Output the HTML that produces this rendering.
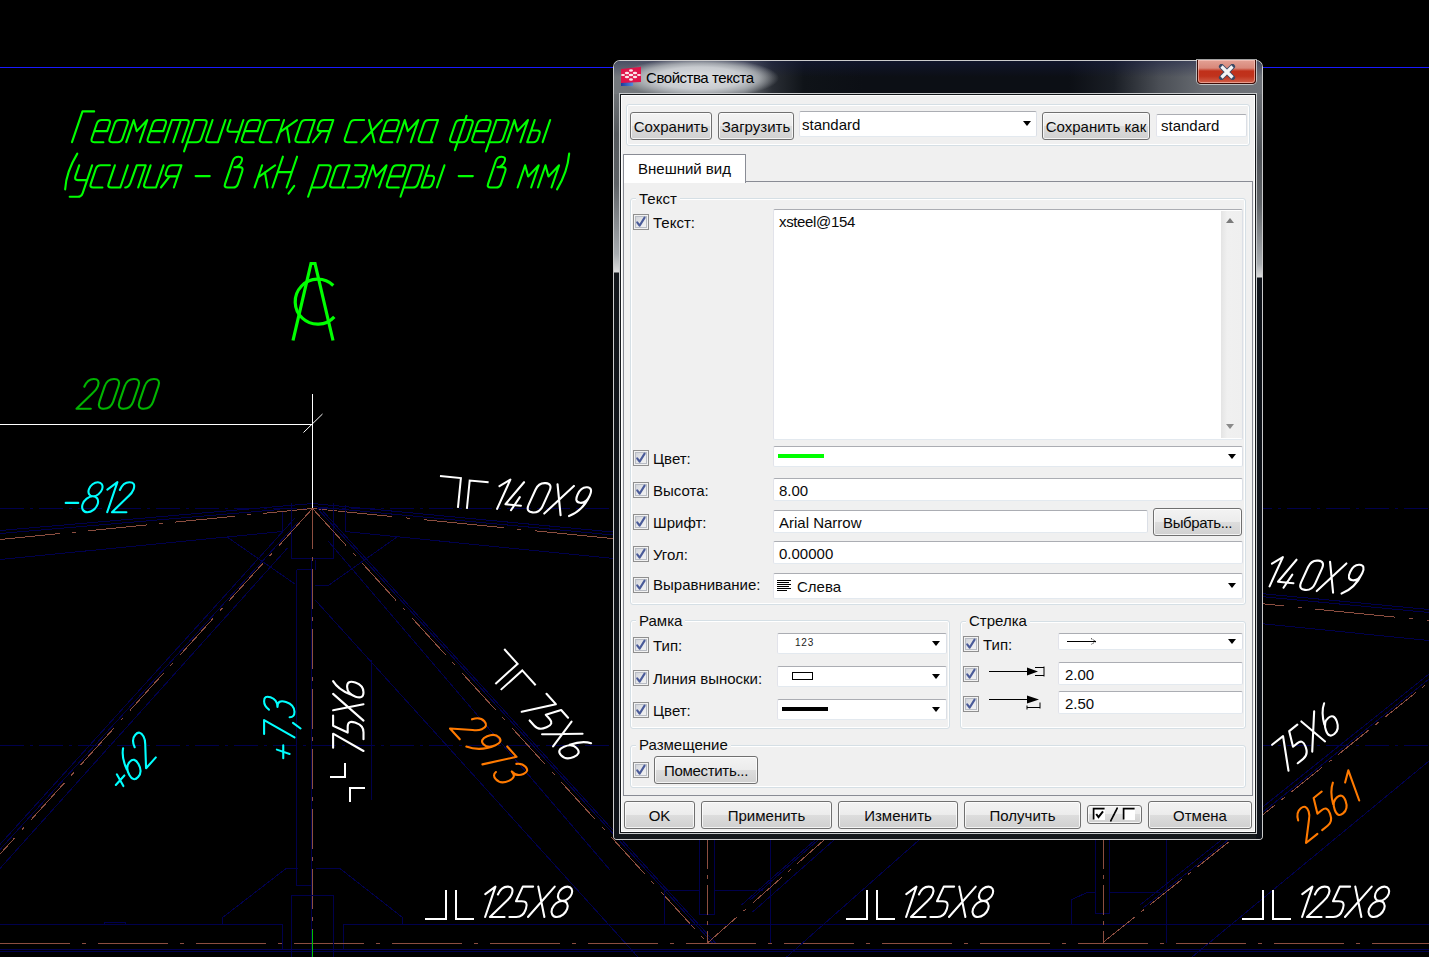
<!DOCTYPE html><html><head><meta charset="utf-8"><title>Свойства текста</title><style>
*{margin:0;padding:0;box-sizing:border-box}
html,body{width:1429px;height:957px;overflow:hidden;background:#000}
body{position:relative;font-family:"Liberation Sans",sans-serif;font-size:15px;color:#000}
div{position:absolute}
.t{white-space:pre;line-height:17px;font-size:15px;color:#0a0a0a}
.btn{border:1px solid #707070;border-radius:3px;background:linear-gradient(#f3f3f3 0%,#ececec 48%,#dddddd 50%,#d0d0d0 100%);box-shadow:inset 0 0 0 1px rgba(255,255,255,.75)}
.edit{background:#fff;border:1px solid #e3e9ef;border-top-color:#abadb3;border-left-color:#e2e3ea;border-right-color:#dbdfe6;border-radius:2px}
.arr{width:0;height:0;border-left:4.5px solid transparent;border-right:4.5px solid transparent;border-top:5px solid #000}
.chk{width:16px;height:16px;border:1px solid #8f8f8f;background:linear-gradient(135deg,#c9ccd3 0%,#e9eaec 55%,#f4f4f4 100%);box-shadow:inset 0 0 0 1px #f2f2f2, inset 0 0 0 2px #b8bcc4}
.chk svg{position:absolute;left:-1px;top:-1px}
.grp{border:1px solid #d5dfe5;border-radius:3px;box-shadow:inset 0 0 0 1px #fff}
.glab{background:#f0f0f0}
</style></head><body>
<svg style="position:absolute;left:0;top:0" width="1429" height="957" viewBox="0 0 1429 957">
<g shape-rendering="crispEdges">
<line x1="0" y1="67.5" x2="1429" y2="67.5" stroke="#1a1aff" stroke-width="1"/>
<line x1="0" y1="508.5" x2="1429" y2="508.5" stroke="#00004c" stroke-width="1" stroke-dasharray="24 6 3 6"/>
<line x1="0" y1="745.5" x2="1429" y2="745.5" stroke="#00004c" stroke-width="1" stroke-dasharray="24 6 3 6"/>
<line x1="0" y1="530.5" x2="312.5" y2="503.5" stroke="#00004c" stroke-width="1"/>
<line x1="0" y1="533.5" x2="280" y2="509.5" stroke="#00004c" stroke-width="1"/>
<line x1="0" y1="539.5" x2="312.5" y2="508.5" stroke="#8c4e40" stroke-width="1" stroke-dasharray="60 12 4 12"/>
<line x1="0" y1="559.5" x2="282" y2="531.5" stroke="#00004c" stroke-width="1"/>
<path d="M282,531.5 L282,512" fill="none" stroke="#00004c" stroke-width="1"/>
<line x1="312.5" y1="503.5" x2="1429" y2="609.5" stroke="#00004c" stroke-width="1"/>
<line x1="312.5" y1="506.5" x2="1429" y2="612.5" stroke="#00004c" stroke-width="1"/>
<line x1="312.5" y1="508.5" x2="1429" y2="620.5" stroke="#8c4e40" stroke-width="1" stroke-dasharray="80 14 4 14"/>
<line x1="345" y1="531.5" x2="1429" y2="640.5" stroke="#00004c" stroke-width="1"/>
<path d="M345,531.5 L345,505" fill="none" stroke="#00004c" stroke-width="1"/>
<path d="M291.5,503 L291.5,558.5 L333.5,558.5 L333.5,503" fill="none" stroke="#00004c" stroke-width="1"/>
<path d="M296.5,569.5 L296.5,885.5 L311.5,885.5" fill="none" stroke="#00004c" stroke-width="1"/>
<path d="M296.5,569.5 L311.5,569.5" fill="none" stroke="#00004c" stroke-width="1"/>
<path d="M227,537 L295,584" fill="none" stroke="#00004c" stroke-width="1"/>
<path d="M397,537 L329,585 L315,585" fill="none" stroke="#00004c" stroke-width="1"/>
<path d="M315,570 L315,560" fill="none" stroke="#00004c" stroke-width="1"/>
<line x1="312.5" y1="508.5" x2="312.5" y2="957" stroke="#8c4e40" stroke-width="1" stroke-dasharray="40 8 4 8"/>
<line x1="311.5" y1="560" x2="311.5" y2="957" stroke="#00004c" stroke-width="1"/>
<line x1="371.5" y1="660" x2="371.5" y2="800" stroke="#00004c" stroke-width="1.5"/>
<line x1="312.5" y1="508.5" x2="-93.0153707052441" y2="957" stroke="#8c4e40" stroke-width="1" stroke-dasharray="50 10 4 10"/>
<line x1="298" y1="522" x2="-86" y2="944" stroke="#00004c" stroke-width="1"/>
<line x1="295" y1="518" x2="-90" y2="944" stroke="#00004c" stroke-width="1"/>
<line x1="287.5" y1="548" x2="-79.4" y2="957" stroke="#00004c" stroke-width="1"/>
<line x1="312.5" y1="508.5" x2="707.5" y2="943" stroke="#8c4e40" stroke-width="1" stroke-dasharray="50 10 4 10"/>
<line x1="317.5" y1="508.5" x2="712.5" y2="943" stroke="#00004c" stroke-width="1"/>
<line x1="320.5" y1="508.5" x2="715.5" y2="943" stroke="#00004c" stroke-width="1"/>
<line x1="328.5" y1="541.5" x2="610" y2="870" stroke="#00004c" stroke-width="1"/>
<line x1="315.2" y1="600" x2="638.0" y2="957" stroke="#00004c" stroke-width="1"/>
<path d="M0,924.5 L282.5,924.5 L282.5,949.5" fill="none" stroke="#00004c" stroke-width="1"/>
<path d="M343.5,949.5 L343.5,924.5 L1429,924.5" fill="none" stroke="#00004c" stroke-width="1"/>
<line x1="0" y1="943.5" x2="1429" y2="943.5" stroke="#8c4e40" stroke-width="1" stroke-dasharray="70 12 4 12"/>
<line x1="0" y1="949.5" x2="1429" y2="949.5" stroke="#00004c" stroke-width="1"/>
<line x1="0" y1="951.5" x2="1429" y2="951.5" stroke="#00004c" stroke-width="1"/>
<path d="M222,924.5 L222,918 L286,868.5 L298,868.5" fill="none" stroke="#00004c" stroke-width="1"/>
<path d="M291,957 L291,895 L333,895 L333,957" fill="none" stroke="#00004c" stroke-width="1"/>
<path d="M316,868.5 L340,868.5 L402.5,917.5 L402.5,924.5" fill="none" stroke="#00004c" stroke-width="1"/>
<path d="M104,924.5 L104,922 L125,922 L125,924.5" fill="none" stroke="#00004c" stroke-width="1"/>
<path d="M699.5,839 L699.5,914.5 L714.5,914.5 L714.5,839" fill="none" stroke="#00004c" stroke-width="1"/>
<line x1="707.5" y1="839" x2="707.5" y2="943" stroke="#8c4e40" stroke-width="1" stroke-dasharray="30 6 4 6"/>
<line x1="770.5" y1="839" x2="770.5" y2="943" stroke="#00004c" stroke-width="1"/>
<path d="M664,924.5 L664,890 L699.5,890" fill="none" stroke="#00004c" stroke-width="1"/>
<path d="M714.5,890 L763,890" fill="none" stroke="#00004c" stroke-width="1"/>
<line x1="707.5" y1="943" x2="825.1470588235294" y2="839" stroke="#8c4e40" stroke-width="1" stroke-dasharray="40 8 4 8"/>
<line x1="741.4864253393665" y1="905" x2="816.1470588235294" y2="839" stroke="#00004c" stroke-width="1"/>
<line x1="750.1425339366516" y1="900" x2="819.1470588235294" y2="839" stroke="#00004c" stroke-width="1"/>
<line x1="752.5678733031674" y1="912" x2="835.1470588235294" y2="839" stroke="#00004c" stroke-width="1"/>
<line x1="786.6628959276018" y1="957" x2="920.1470588235294" y2="839" stroke="#00004c" stroke-width="1"/>
<path d="M1095.5,839 L1095.5,913.5 L1109.5,913.5 L1109.5,839" fill="none" stroke="#00004c" stroke-width="1"/>
<line x1="1103.5" y1="839" x2="1103.5" y2="943" stroke="#8c4e40" stroke-width="1" stroke-dasharray="30 6 4 6"/>
<line x1="1166.5" y1="839" x2="1166.5" y2="943" stroke="#00004c" stroke-width="1"/>
<path d="M1071,924.5 L1071,900 L1088,892 L1095.5,892" fill="none" stroke="#00004c" stroke-width="1"/>
<path d="M1109.5,892 L1160,892" fill="none" stroke="#00004c" stroke-width="1"/>
<line x1="1103.5" y1="942" x2="1429" y2="682" stroke="#8c4e40" stroke-width="1" stroke-dasharray="40 8 4 8"/>
<line x1="1140" y1="905" x2="1429" y2="674" stroke="#00004c" stroke-width="1"/>
<line x1="1143" y1="908" x2="1429" y2="679" stroke="#00004c" stroke-width="1"/>
<line x1="1192" y1="957" x2="1429" y2="761" stroke="#00004c" stroke-width="1"/>
</g>
<g shape-rendering="crispEdges">
<line x1="0" y1="424.5" x2="313" y2="424.5" stroke="#ffffff" stroke-width="1"/>
<line x1="312.5" y1="394" x2="312.5" y2="508" stroke="#ffffff" stroke-width="1"/>
</g>
<line x1="303.5" y1="432.5" x2="322.5" y2="414" stroke="#ffffff" stroke-width="1"/>
<line x1="312.5" y1="930" x2="312.5" y2="957" stroke="#00c000" stroke-width="1" shape-rendering="crispEdges"/>
<g transform="translate(72.00,142.20) rotate(0.00) scale(3.0800,3.0800) skewX(-18.78)" fill="none" stroke="#00ff00" stroke-width="2.1" stroke-linecap="round" stroke-linejoin="round" vector-effect="non-scaling-stroke"><path vector-effect="non-scaling-stroke" transform="translate(0.00,0)" d="M0,0 V-10 H3.8"/><path vector-effect="non-scaling-stroke" transform="translate(6.00,0)" d="M0,-3.6 H4.2 V-6 Q4.2,-7.2 3,-7.2 H1.2 Q0,-7.2 0,-6 V-1.2 Q0,0 1.2,0 H4.2"/><path vector-effect="non-scaling-stroke" transform="translate(11.80,0)" d="M1.2,0 H3 Q4.2,0 4.2,-1.2 V-6 Q4.2,-7.2 3,-7.2 H1.2 Q0,-7.2 0,-6 V-1.2 Q0,0 1.2,0 Z"/><path vector-effect="non-scaling-stroke" transform="translate(17.60,0)" d="M0,0 V-7.2 L2.2,-3.6 L4.4,-7.2 V0"/><path vector-effect="non-scaling-stroke" transform="translate(24.20,0)" d="M0,-3.6 H4.2 V-6 Q4.2,-7.2 3,-7.2 H1.2 Q0,-7.2 0,-6 V-1.2 Q0,0 1.2,0 H4.2"/><path vector-effect="non-scaling-stroke" transform="translate(30.00,0)" d="M0,0 V-7.2 H4.6 Q5.8,-7.2 5.8,-6 V0 M2.9,-7.2 V0"/><path vector-effect="non-scaling-stroke" transform="translate(37.40,0)" d="M0,3 V-7.2 H3 Q4.2,-7.2 4.2,-6 V-1.2 Q4.2,0 3,0 H0"/><path vector-effect="non-scaling-stroke" transform="translate(43.20,0)" d="M0,-7.2 V-1.2 Q0,0 1.2,0 H4.2 M4.2,-7.2 V0"/><path vector-effect="non-scaling-stroke" transform="translate(49.00,0)" d="M0,-7.2 V-4.6 Q0,-3.4 1.2,-3.4 H4.2 M4.2,-7.2 V0"/><path vector-effect="non-scaling-stroke" transform="translate(54.80,0)" d="M0,-3.6 H4.2 V-6 Q4.2,-7.2 3,-7.2 H1.2 Q0,-7.2 0,-6 V-1.2 Q0,0 1.2,0 H4.2"/><path vector-effect="non-scaling-stroke" transform="translate(60.60,0)" d="M4.2,-7.2 H1.2 Q0,-7.2 0,-6 V-1.2 Q0,0 1.2,0 H4.2"/><path vector-effect="non-scaling-stroke" transform="translate(66.40,0)" d="M0,-7.2 V0 M4.2,-7.2 L0,-3.3 M1.7,-4.9 L4.2,0"/><path vector-effect="non-scaling-stroke" transform="translate(72.20,0)" d="M4.2,-7.2 H1.2 Q0,-7.2 0,-6 V-1.2 Q0,0 1.2,0 H4.2 M4.2,-7.2 V-0.6 Q4.2,0 4.8,0"/><path vector-effect="non-scaling-stroke" transform="translate(78.20,0)" d="M4.2,0 V-7.2 H1.2 Q0,-7.2 0,-6 V-4.8 Q0,-3.6 1.2,-3.6 H4.2 M1.6,-3.6 L0,0"/><path vector-effect="non-scaling-stroke" transform="translate(88.20,0)" d="M4.2,-7.2 H1.2 Q0,-7.2 0,-6 V-1.2 Q0,0 1.2,0 H4.2"/><path vector-effect="non-scaling-stroke" transform="translate(94.00,0)" d="M0,-7.2 L4.2,0 M4.2,-7.2 L0,0"/><path vector-effect="non-scaling-stroke" transform="translate(99.80,0)" d="M0,-3.6 H4.2 V-6 Q4.2,-7.2 3,-7.2 H1.2 Q0,-7.2 0,-6 V-1.2 Q0,0 1.2,0 H4.2"/><path vector-effect="non-scaling-stroke" transform="translate(105.60,0)" d="M0,0 V-7.2 L2.2,-3.6 L4.4,-7.2 V0"/><path vector-effect="non-scaling-stroke" transform="translate(112.20,0)" d="M4.2,-7.2 H1.2 Q0,-7.2 0,-6 V-1.2 Q0,0 1.2,0 H4.2 M4.2,-7.2 V-0.6 Q4.2,0 4.8,0"/><path vector-effect="non-scaling-stroke" transform="translate(122.40,0)" d="M2.8,-8.6 V2.6 M2.8,-7.2 H1.2 Q0,-7.2 0,-6 V-1.2 Q0,0 1.2,0 H4.4 Q5.6,0 5.6,-1.2 V-6 Q5.6,-7.2 4.4,-7.2 Z"/><path vector-effect="non-scaling-stroke" transform="translate(129.60,0)" d="M0,-3.6 H4.2 V-6 Q4.2,-7.2 3,-7.2 H1.2 Q0,-7.2 0,-6 V-1.2 Q0,0 1.2,0 H4.2"/><path vector-effect="non-scaling-stroke" transform="translate(135.40,0)" d="M0,3 V-7.2 H3 Q4.2,-7.2 4.2,-6 V-1.2 Q4.2,0 3,0 H0"/><path vector-effect="non-scaling-stroke" transform="translate(141.20,0)" d="M0,0 V-7.2 L2.2,-3.6 L4.4,-7.2 V0"/><path vector-effect="non-scaling-stroke" transform="translate(147.80,0)" d="M0,-7.2 V0 H1.9 Q3.1,0 3.1,-1.2 V-2.6 Q3.1,-3.8 1.9,-3.8 H0 M5.0,-7.2 V0"/></g>
<g transform="translate(63.00,187.50) rotate(0.00) scale(3.0800,3.0800) skewX(-18.78)" fill="none" stroke="#00ff00" stroke-width="2.1" stroke-linecap="round" stroke-linejoin="round" vector-effect="non-scaling-stroke"><path vector-effect="non-scaling-stroke" transform="translate(0.00,0)" d="M0.9,-11 Q-0.7,-5 0.9,0.6"/><path vector-effect="non-scaling-stroke" transform="translate(2.80,0)" d="M0,-7.2 V-3.6 Q0,-2.4 1.2,-2.4 H4.2 M4.2,-7.2 V1.8 Q4.2,3 3,3 H0.4"/><path vector-effect="non-scaling-stroke" transform="translate(8.60,0)" d="M4.2,-7.2 H1.2 Q0,-7.2 0,-6 V-1.2 Q0,0 1.2,0 H4.2"/><path vector-effect="non-scaling-stroke" transform="translate(14.40,0)" d="M0,-7.2 V-1.2 Q0,0 1.2,0 H4.2 M4.2,-7.2 V0"/><path vector-effect="non-scaling-stroke" transform="translate(20.20,0)" d="M0,0 Q1.1,0 1.2,-1.4 L1.3,-7.2 H4.2 V0"/><path vector-effect="non-scaling-stroke" transform="translate(26.00,0)" d="M0,-7.2 V-1.2 Q0,0 1.2,0 H4.2 M4.2,-7.2 V0"/><path vector-effect="non-scaling-stroke" transform="translate(31.80,0)" d="M4.2,0 V-7.2 H1.2 Q0,-7.2 0,-6 V-4.8 Q0,-3.6 1.2,-3.6 H4.2 M1.6,-3.6 L0,0"/><path vector-effect="non-scaling-stroke" transform="translate(41.80,0)" d="M0,-3.7 H4.6"/><path vector-effect="non-scaling-stroke" transform="translate(52.20,0)" d="M0,-1.2 V-8.7 Q0,-10 1.4,-10 Q2.9,-10 2.9,-8.6 Q2.9,-6.8 1.2,-6.6 H3 Q4.2,-6.6 4.2,-5.2 V-1.2 Q4.2,0 3,0 H1.2 Q0,0 0,-1.2"/><path vector-effect="non-scaling-stroke" transform="translate(62.20,0)" d="M0,-7.2 V0 M4.2,-7.2 L0,-3.3 M1.7,-4.9 L4.2,0"/><path vector-effect="non-scaling-stroke" transform="translate(68.00,0)" d="M0,0 V-10 M4.6,-10 V0 M0,-5 H4.6"/><path vector-effect="non-scaling-stroke" transform="translate(74.20,0)" d="M0.7,-0.5 L-0.3,2"/><path vector-effect="non-scaling-stroke" transform="translate(80.60,0)" d="M0,3 V-7.2 H3 Q4.2,-7.2 4.2,-6 V-1.2 Q4.2,0 3,0 H0"/><path vector-effect="non-scaling-stroke" transform="translate(86.40,0)" d="M4.2,-7.2 H1.2 Q0,-7.2 0,-6 V-1.2 Q0,0 1.2,0 H4.2 M4.2,-7.2 V-0.6 Q4.2,0 4.8,0"/><path vector-effect="non-scaling-stroke" transform="translate(92.40,0)" d="M0,-7.2 H3 Q4.2,-7.2 4.2,-6 V-4.8 Q4.2,-3.6 3,-3.6 H1.4 M3,-3.6 Q4.2,-3.6 4.2,-2.4 V-1.2 Q4.2,0 3,0 H0"/><path vector-effect="non-scaling-stroke" transform="translate(98.20,0)" d="M0,0 V-7.2 L2.2,-3.6 L4.4,-7.2 V0"/><path vector-effect="non-scaling-stroke" transform="translate(104.80,0)" d="M0,-3.6 H4.2 V-6 Q4.2,-7.2 3,-7.2 H1.2 Q0,-7.2 0,-6 V-1.2 Q0,0 1.2,0 H4.2"/><path vector-effect="non-scaling-stroke" transform="translate(110.60,0)" d="M0,3 V-7.2 H3 Q4.2,-7.2 4.2,-6 V-1.2 Q4.2,0 3,0 H0"/><path vector-effect="non-scaling-stroke" transform="translate(116.40,0)" d="M0,-7.2 V0 H1.9 Q3.1,0 3.1,-1.2 V-2.6 Q3.1,-3.8 1.9,-3.8 H0 M5.0,-7.2 V0"/><path vector-effect="non-scaling-stroke" transform="translate(127.20,0)" d="M0,-3.7 H4.6"/><path vector-effect="non-scaling-stroke" transform="translate(137.60,0)" d="M0,-1.2 V-8.7 Q0,-10 1.4,-10 Q2.9,-10 2.9,-8.6 Q2.9,-6.8 1.2,-6.6 H3 Q4.2,-6.6 4.2,-5.2 V-1.2 Q4.2,0 3,0 H1.2 Q0,0 0,-1.2"/><path vector-effect="non-scaling-stroke" transform="translate(147.60,0)" d="M0,0 V-7.2 L2.2,-3.6 L4.4,-7.2 V0"/><path vector-effect="non-scaling-stroke" transform="translate(154.20,0)" d="M0,0 V-7.2 L2.2,-3.6 L4.4,-7.2 V0"/><path vector-effect="non-scaling-stroke" transform="translate(160.80,0)" d="M-0.2,-11 Q1.3,-5 -0.2,0.6"/></g>
<g transform="translate(76.50,408.80) rotate(0.00) scale(2.9800,2.9800) skewX(-18.78)" fill="none" stroke="#00b400" stroke-width="2.1" stroke-linecap="round" stroke-linejoin="round" vector-effect="non-scaling-stroke"><path vector-effect="non-scaling-stroke" transform="translate(0.00,0)" d="M0.1,-7.4 Q0.3,-10 2.4,-10 Q4.6,-10 4.6,-7.6 Q4.6,-6.4 3.6,-5.2 L0,0 H4.8"/><path vector-effect="non-scaling-stroke" transform="translate(6.90,0)" d="M0,-2.4 V-7.6 Q0,-10 2.3,-10 Q4.6,-10 4.6,-7.6 V-2.4 Q4.6,0 2.3,0 Q0,0 0,-2.4 Z"/><path vector-effect="non-scaling-stroke" transform="translate(13.60,0)" d="M0,-2.4 V-7.6 Q0,-10 2.3,-10 Q4.6,-10 4.6,-7.6 V-2.4 Q4.6,0 2.3,0 Q0,0 0,-2.4 Z"/><path vector-effect="non-scaling-stroke" transform="translate(20.30,0)" d="M0,-2.4 V-7.6 Q0,-10 2.3,-10 Q4.6,-10 4.6,-7.6 V-2.4 Q4.6,0 2.3,0 Q0,0 0,-2.4 Z"/></g>
<g transform="translate(62.50,512.20) rotate(0.00) scale(3.0000,3.0000) skewX(-18.78)" fill="none" stroke="#00ffff" stroke-width="2.1" stroke-linecap="round" stroke-linejoin="round" vector-effect="non-scaling-stroke"><path vector-effect="non-scaling-stroke" transform="translate(0.00,0)" d="M0,-3.1 H4.2"/><path vector-effect="non-scaling-stroke" transform="translate(5.80,0)" d="M2.6,-5.3 A2.2,2.35 0 1 1 2.6,-10 A2.2,2.35 0 1 1 2.6,-5.3 Z M2.5,0 A2.5,2.65 0 1 1 2.5,-5.3 A2.5,2.65 0 1 1 2.5,0 Z"/><path vector-effect="non-scaling-stroke" transform="translate(12.40,0)" d="M0,-7.5 L2.5,-10 V0"/><path vector-effect="non-scaling-stroke" transform="translate(16.50,0)" d="M0.1,-7.4 Q0.3,-10 2.4,-10 Q4.6,-10 4.6,-7.6 Q4.6,-6.4 3.6,-5.2 L0,0 H4.8"/></g>
<g fill="none" stroke="#00ff00" stroke-width="3.2" stroke-linejoin="miter"><path d="M293,340.5 L311,263.5 H315 L333,340.5"/><path d="M333.3,285.5 A22.5,22.5 0 1 0 334.3,316.9"/></g>
<g fill="none" stroke="#fff" stroke-width="2" transform="rotate(5.7 440 476)"><path d="M440,476 H461 V506"/><path d="M470,506 V477.5 H489"/></g>
<g transform="translate(489.50,508.10) rotate(5.70) scale(3.0400,3.0400) skewX(-18.78)" fill="none" stroke="#ffffff" stroke-width="2.1" stroke-linecap="round" stroke-linejoin="round" vector-effect="non-scaling-stroke"><path vector-effect="non-scaling-stroke" transform="translate(0.00,0)" d="M0,-7.5 L2.5,-10 V0"/><path vector-effect="non-scaling-stroke" transform="translate(4.10,0)" d="M3.1,-9.6 L0.4,-1.8 H5.5 M3.9,-4.6 L3.0,0"/><path vector-effect="non-scaling-stroke" transform="translate(11.90,0)" d="M0,-2.4 V-7.6 Q0,-10 2.3,-10 Q4.6,-10 4.6,-7.6 V-2.4 Q4.6,0 2.3,0 Q0,0 0,-2.4 Z"/><path vector-effect="non-scaling-stroke" transform="translate(18.10,0)" d="M0,0 L5.4,-10 M0,-10 L5.4,0"/><path vector-effect="non-scaling-stroke" transform="translate(25.10,0)" d="M4.8,-7.4 Q4.8,-4.7 2.8,-4.7 Q0.8,-4.7 0.8,-7.35 Q0.8,-10 2.8,-10 Q4.8,-10 4.8,-7.4 Q4.8,-2.2 1.2,0"/></g>
<g transform="translate(1262.00,585.60) rotate(5.70) scale(3.0400,3.0400) skewX(-18.78)" fill="none" stroke="#ffffff" stroke-width="2.1" stroke-linecap="round" stroke-linejoin="round" vector-effect="non-scaling-stroke"><path vector-effect="non-scaling-stroke" transform="translate(0.00,0)" d="M0,-7.5 L2.5,-10 V0"/><path vector-effect="non-scaling-stroke" transform="translate(4.10,0)" d="M3.1,-9.6 L0.4,-1.8 H5.5 M3.9,-4.6 L3.0,0"/><path vector-effect="non-scaling-stroke" transform="translate(11.90,0)" d="M0,-2.4 V-7.6 Q0,-10 2.3,-10 Q4.6,-10 4.6,-7.6 V-2.4 Q4.6,0 2.3,0 Q0,0 0,-2.4 Z"/><path vector-effect="non-scaling-stroke" transform="translate(18.10,0)" d="M0,0 L5.4,-10 M0,-10 L5.4,0"/><path vector-effect="non-scaling-stroke" transform="translate(25.10,0)" d="M4.8,-7.4 Q4.8,-4.7 2.8,-4.7 Q0.8,-4.7 0.8,-7.35 Q0.8,-10 2.8,-10 Q4.8,-10 4.8,-7.4 Q4.8,-2.2 1.2,0"/></g>
<g fill="none" stroke="#fff" stroke-width="2" shape-rendering="crispEdges"><path d="M425,918.5 H446 V890"/><path d="M456,890 V918.5 H474"/></g>
<g transform="translate(477.50,917.00) rotate(0.00) scale(3.0400,3.0400) skewX(-18.78)" fill="none" stroke="#ffffff" stroke-width="2.1" stroke-linecap="round" stroke-linejoin="round" vector-effect="non-scaling-stroke"><path vector-effect="non-scaling-stroke" transform="translate(0.00,0)" d="M0,-7.5 L2.5,-10 V0"/><path vector-effect="non-scaling-stroke" transform="translate(4.10,0)" d="M0.1,-7.4 Q0.3,-10 2.4,-10 Q4.6,-10 4.6,-7.6 Q4.6,-6.4 3.6,-5.2 L0,0 H4.8"/><path vector-effect="non-scaling-stroke" transform="translate(10.50,0)" d="M4.4,-10 H1 L0.4,-5.2 H2.3 Q4.5,-5.2 4.5,-2.8 V-2.4 Q4.5,0 2.3,0 H0"/><path vector-effect="non-scaling-stroke" transform="translate(16.60,0)" d="M0,0 L5.4,-10 M0,-10 L5.4,0"/><path vector-effect="non-scaling-stroke" transform="translate(23.60,0)" d="M2.6,-5.3 A2.2,2.35 0 1 1 2.6,-10 A2.2,2.35 0 1 1 2.6,-5.3 Z M2.5,0 A2.5,2.65 0 1 1 2.5,-5.3 A2.5,2.65 0 1 1 2.5,0 Z"/></g>
<g fill="none" stroke="#fff" stroke-width="2" shape-rendering="crispEdges"><path d="M846,918.5 H867 V890"/><path d="M877,890 V918.5 H895"/></g>
<g transform="translate(898.50,917.00) rotate(0.00) scale(3.0400,3.0400) skewX(-18.78)" fill="none" stroke="#ffffff" stroke-width="2.1" stroke-linecap="round" stroke-linejoin="round" vector-effect="non-scaling-stroke"><path vector-effect="non-scaling-stroke" transform="translate(0.00,0)" d="M0,-7.5 L2.5,-10 V0"/><path vector-effect="non-scaling-stroke" transform="translate(4.10,0)" d="M0.1,-7.4 Q0.3,-10 2.4,-10 Q4.6,-10 4.6,-7.6 Q4.6,-6.4 3.6,-5.2 L0,0 H4.8"/><path vector-effect="non-scaling-stroke" transform="translate(10.50,0)" d="M4.4,-10 H1 L0.4,-5.2 H2.3 Q4.5,-5.2 4.5,-2.8 V-2.4 Q4.5,0 2.3,0 H0"/><path vector-effect="non-scaling-stroke" transform="translate(16.60,0)" d="M0,0 L5.4,-10 M0,-10 L5.4,0"/><path vector-effect="non-scaling-stroke" transform="translate(23.60,0)" d="M2.6,-5.3 A2.2,2.35 0 1 1 2.6,-10 A2.2,2.35 0 1 1 2.6,-5.3 Z M2.5,0 A2.5,2.65 0 1 1 2.5,-5.3 A2.5,2.65 0 1 1 2.5,0 Z"/></g>
<g fill="none" stroke="#fff" stroke-width="2" shape-rendering="crispEdges"><path d="M1242,918.5 H1263 V890"/><path d="M1273,890 V918.5 H1291"/></g>
<g transform="translate(1294.50,917.00) rotate(0.00) scale(3.0400,3.0400) skewX(-18.78)" fill="none" stroke="#ffffff" stroke-width="2.1" stroke-linecap="round" stroke-linejoin="round" vector-effect="non-scaling-stroke"><path vector-effect="non-scaling-stroke" transform="translate(0.00,0)" d="M0,-7.5 L2.5,-10 V0"/><path vector-effect="non-scaling-stroke" transform="translate(4.10,0)" d="M0.1,-7.4 Q0.3,-10 2.4,-10 Q4.6,-10 4.6,-7.6 Q4.6,-6.4 3.6,-5.2 L0,0 H4.8"/><path vector-effect="non-scaling-stroke" transform="translate(10.50,0)" d="M4.4,-10 H1 L0.4,-5.2 H2.3 Q4.5,-5.2 4.5,-2.8 V-2.4 Q4.5,0 2.3,0 H0"/><path vector-effect="non-scaling-stroke" transform="translate(16.60,0)" d="M0,0 L5.4,-10 M0,-10 L5.4,0"/><path vector-effect="non-scaling-stroke" transform="translate(23.60,0)" d="M2.6,-5.3 A2.2,2.35 0 1 1 2.6,-10 A2.2,2.35 0 1 1 2.6,-5.3 Z M2.5,0 A2.5,2.65 0 1 1 2.5,-5.3 A2.5,2.65 0 1 1 2.5,0 Z"/></g>
<g transform="translate(121.60,795.30) rotate(-47.90) scale(3.0400,3.0400) skewX(-18.78)" fill="none" stroke="#00ffff" stroke-width="2.1" stroke-linecap="round" stroke-linejoin="round" vector-effect="non-scaling-stroke"><path vector-effect="non-scaling-stroke" transform="translate(0.00,0)" d="M0,-3.7 H4.2 M2.1,-5.8 V-1.6"/><path vector-effect="non-scaling-stroke" transform="translate(5.80,0)" d="M2.6,-10 Q0.5,-8.4 0.15,-4.4 M0,-2.6 Q0,-5.4 2.3,-5.4 Q4.6,-5.4 4.6,-2.7 Q4.6,0 2.3,0 Q0,0 0,-2.6 Z"/><path vector-effect="non-scaling-stroke" transform="translate(12.00,0)" d="M0.1,-7.4 Q0.3,-10 2.4,-10 Q4.6,-10 4.6,-7.6 Q4.6,-6.4 3.6,-5.2 L0,0 H4.8"/></g>
<g transform="translate(294.50,762.00) rotate(-90.00) scale(3.0400,3.0400) skewX(-18.78)" fill="none" stroke="#00ffff" stroke-width="2.1" stroke-linecap="round" stroke-linejoin="round" vector-effect="non-scaling-stroke"><path vector-effect="non-scaling-stroke" transform="translate(0.00,0)" d="M0,-3.7 H4.2 M2.1,-5.8 V-1.6"/><path vector-effect="non-scaling-stroke" transform="translate(5.80,0)" d="M0,-10 H4.6 L2.3,0"/><path vector-effect="non-scaling-stroke" transform="translate(12.00,0)" d="M0.7,-0.5 L-0.3,2"/><path vector-effect="non-scaling-stroke" transform="translate(14.20,0)" d="M0.2,-8.4 Q0.8,-10 2.4,-10 Q4.4,-10 4.4,-7.9 Q4.4,-5.6 2,-5.6 Q4.6,-5.6 4.6,-2.8 Q4.6,0 2.3,0 Q0.5,0 0,-1.6"/></g>
<g transform="translate(363.50,758.00) rotate(-90.00) scale(3.0400,3.0400) skewX(-18.78)" fill="none" stroke="#ffffff" stroke-width="2.1" stroke-linecap="round" stroke-linejoin="round" vector-effect="non-scaling-stroke"><path vector-effect="non-scaling-stroke" transform="translate(0.00,0)" d="M0,-10 H4.6 L2.3,0"/><path vector-effect="non-scaling-stroke" transform="translate(6.20,0)" d="M4.4,-10 H1 L0.4,-5.2 H2.3 Q4.5,-5.2 4.5,-2.8 V-2.4 Q4.5,0 2.3,0 H0"/><path vector-effect="non-scaling-stroke" transform="translate(12.30,0)" d="M0,0 L5.4,-10 M0,-10 L5.4,0"/><path vector-effect="non-scaling-stroke" transform="translate(19.30,0)" d="M2.6,-10 Q0.5,-8.4 0.15,-4.4 M0,-2.6 Q0,-5.4 2.3,-5.4 Q4.6,-5.4 4.6,-2.7 Q4.6,0 2.3,0 Q0,0 0,-2.6 Z"/></g>
<g fill="none" stroke="#fff" stroke-width="2" shape-rendering="crispEdges"><path d="M344.5,763 V776.5 H330"/><path d="M365,787.5 H349.5 V802"/></g>
<g transform="translate(517.00,706.50) rotate(47.90) scale(3.0400,3.0400) skewX(-18.78)" fill="none" stroke="#ffffff" stroke-width="2.1" stroke-linecap="round" stroke-linejoin="round" vector-effect="non-scaling-stroke"><path vector-effect="non-scaling-stroke" transform="translate(0.00,0)" d="M0,-10 H4.6 L2.3,0"/><path vector-effect="non-scaling-stroke" transform="translate(6.20,0)" d="M4.4,-10 H1 L0.4,-5.2 H2.3 Q4.5,-5.2 4.5,-2.8 V-2.4 Q4.5,0 2.3,0 H0"/><path vector-effect="non-scaling-stroke" transform="translate(12.30,0)" d="M0,0 L5.4,-10 M0,-10 L5.4,0"/><path vector-effect="non-scaling-stroke" transform="translate(19.30,0)" d="M2.6,-10 Q0.5,-8.4 0.15,-4.4 M0,-2.6 Q0,-5.4 2.3,-5.4 Q4.6,-5.4 4.6,-2.7 Q4.6,0 2.3,0 Q0,0 0,-2.6 Z"/></g>
<g fill="none" stroke="#fff" stroke-width="2" transform="rotate(47.9 490 678)"><path d="M478,648 H498 V678"/><path d="M506,678 V649 H526"/></g>
<g transform="translate(450.00,728.50) rotate(47.90) scale(3.0400,3.0400) skewX(-18.78)" fill="none" stroke="#ff7a00" stroke-width="2.1" stroke-linecap="round" stroke-linejoin="round" vector-effect="non-scaling-stroke"><path vector-effect="non-scaling-stroke" transform="translate(0.00,0)" d="M0.1,-7.4 Q0.3,-10 2.4,-10 Q4.6,-10 4.6,-7.6 Q4.6,-6.4 3.6,-5.2 L0,0 H4.8"/><path vector-effect="non-scaling-stroke" transform="translate(6.80,0)" d="M4.8,-7.4 Q4.8,-4.7 2.8,-4.7 Q0.8,-4.7 0.8,-7.35 Q0.8,-10 2.8,-10 Q4.8,-10 4.8,-7.4 Q4.8,-2.2 1.2,0"/><path vector-effect="non-scaling-stroke" transform="translate(13.60,0)" d="M0,-10 H4.6 L2.3,0"/><path vector-effect="non-scaling-stroke" transform="translate(20.20,0)" d="M0.2,-8.4 Q0.8,-10 2.4,-10 Q4.4,-10 4.4,-7.9 Q4.4,-5.6 2,-5.6 Q4.6,-5.6 4.6,-2.8 Q4.6,0 2.3,0 Q0.5,0 0,-1.6"/></g>
<g transform="translate(1283.00,775.00) rotate(-38.60) scale(3.0400,3.0400) skewX(-18.78)" fill="none" stroke="#ffffff" stroke-width="2.1" stroke-linecap="round" stroke-linejoin="round" vector-effect="non-scaling-stroke"><path vector-effect="non-scaling-stroke" transform="translate(0.00,0)" d="M0,-10 H4.6 L2.3,0"/><path vector-effect="non-scaling-stroke" transform="translate(6.20,0)" d="M4.4,-10 H1 L0.4,-5.2 H2.3 Q4.5,-5.2 4.5,-2.8 V-2.4 Q4.5,0 2.3,0 H0"/><path vector-effect="non-scaling-stroke" transform="translate(12.30,0)" d="M0,0 L5.4,-10 M0,-10 L5.4,0"/><path vector-effect="non-scaling-stroke" transform="translate(19.30,0)" d="M2.6,-10 Q0.5,-8.4 0.15,-4.4 M0,-2.6 Q0,-5.4 2.3,-5.4 Q4.6,-5.4 4.6,-2.7 Q4.6,0 2.3,0 Q0,0 0,-2.6 Z"/></g>
<g transform="translate(1306.00,843.00) rotate(-38.60) scale(3.0400,3.0400) skewX(-18.78)" fill="none" stroke="#ff7a00" stroke-width="2.1" stroke-linecap="round" stroke-linejoin="round" vector-effect="non-scaling-stroke"><path vector-effect="non-scaling-stroke" transform="translate(0.00,0)" d="M0.1,-7.4 Q0.3,-10 2.4,-10 Q4.6,-10 4.6,-7.6 Q4.6,-6.4 3.6,-5.2 L0,0 H4.8"/><path vector-effect="non-scaling-stroke" transform="translate(6.80,0)" d="M4.4,-10 H1 L0.4,-5.2 H2.3 Q4.5,-5.2 4.5,-2.8 V-2.4 Q4.5,0 2.3,0 H0"/><path vector-effect="non-scaling-stroke" transform="translate(13.30,0)" d="M2.6,-10 Q0.5,-8.4 0.15,-4.4 M0,-2.6 Q0,-5.4 2.3,-5.4 Q4.6,-5.4 4.6,-2.7 Q4.6,0 2.3,0 Q0,0 0,-2.6 Z"/><path vector-effect="non-scaling-stroke" transform="translate(19.90,0)" d="M0,-7.5 L2.5,-10 V0"/></g>
</svg>
<div style="left:613px;top:60px;width:650px;height:780px;border-radius:7px 7px 4px 4px;border:1px solid rgba(235,235,235,.85);background:linear-gradient(to bottom,#15191d 0,#15191d 100%);overflow:hidden"><div style="left:0;top:0;width:648px;height:33px;background:linear-gradient(to right,#74787c 0px,#70747a 130px,#2a2e35 158px,#0f1318 190px,#0c0f15 250px,#0c0f15 455px,#1a1e25 500px,#4a4e55 545px,#686c72 590px,#6e7278 648px)"></div><div style="left:0;top:0;width:648px;height:16px;background:linear-gradient(to bottom,rgba(22,28,70,.45),rgba(0,0,0,0))"></div><div style="left:5px;top:-3px;width:160px;height:40px;background:radial-gradient(ellipse 50% 50% at 50% 50%,rgba(222,224,227,1) 0%,rgba(205,208,212,.95) 55%,rgba(180,184,188,.8) 75%,rgba(140,144,148,0) 100%)"></div><div style="left:0;top:33px;width:6px;height:746px;background:linear-gradient(to bottom,#6e7276 0px,#55595d 40px,#5d6165 90px,#a8acb0 160px,#dcdcdc 178px,#12161b 179px,#10141a 746px)"></div><div style="left:642px;top:33px;width:6px;height:746px;background:linear-gradient(to bottom,#6a6e73 0px,#4e5257 60px,#606468 110px,#a9adb1 170px,#dddddd 183px,#0e1219 184px,#0d1118 746px)"></div></div>
<svg style="position:absolute;left:620px;top:66px" width="22" height="22" viewBox="0 0 22 22"><defs><linearGradient id="ib" x1="0" x2="1"><stop offset="0" stop-color="#1c3a9a"/><stop offset="1" stop-color="#4f8be0"/></linearGradient></defs><rect x="1" y="16" width="12" height="4" fill="url(#ib)"/><path d="M1 3 L20 1 L21 0.5 L21 16 L1 17 Z" fill="#e0144a"/><g fill="#fff" opacity=".9"><ellipse cx="11" cy="4.5" rx="2" ry="1.2"/><ellipse cx="7" cy="7" rx="2.2" ry="1.2"/><ellipse cx="15" cy="7" rx="2.2" ry="1.2"/><ellipse cx="3" cy="9" rx="2" ry="1.1"/><ellipse cx="11" cy="9" rx="2.4" ry="1.2"/><ellipse cx="19" cy="9" rx="2" ry="1.1"/><ellipse cx="7" cy="11" rx="2.2" ry="1.2"/><ellipse cx="15" cy="11" rx="2.2" ry="1.2"/><ellipse cx="11" cy="13.5" rx="2" ry="1.2"/></g></svg>
<div class="t" style="left:646px;top:69px;color:#000;letter-spacing:-0.45px">Свойства текста</div>
<div style="left:1197px;top:60px;width:59px;height:24px;border:1px solid #3d0c06;border-top:none;border-radius:0 0 4px 4px;background:linear-gradient(to bottom,#e3a195 0%,#d8887a 35%,#c0301a 48%,#c0321c 70%,#d0604a 100%);box-shadow:inset 0 0 0 1px rgba(255,210,200,.55), 0 0 0 1px rgba(230,230,230,.7)"></div>
<svg style="position:absolute;left:1218px;top:64px" width="18" height="16" viewBox="0 0 18 16"><path d="M3.5 2.5 L14.5 13.5 M14.5 2.5 L3.5 13.5" stroke="#3b4a66" stroke-width="5.2" stroke-linecap="round"/><path d="M3.5 2.5 L14.5 13.5 M14.5 2.5 L3.5 13.5" stroke="#f4f4f4" stroke-width="3.2" stroke-linecap="butt"/></svg>
<div style="left:619px;top:93px;width:638px;height:741px;border:1px solid #c9cbcd;background:#15181b"></div>
<div style="left:620px;top:94px;width:636px;height:739px;border:1px solid #15181b;background:#f0f0f0;box-shadow:inset 0 0 0 1px #fff"></div>
<div class="grp" style="left:626px;top:104px;width:624px;height:42px;"></div>
<div class="btn" style="left:630px;top:112px;width:82px;height:28px;"></div>
<div class="t" style="left:630px;width:82px;text-align:center;top:118px;">Сохранить</div>
<div class="btn" style="left:718px;top:112px;width:76px;height:28px;"></div>
<div class="t" style="left:718px;width:76px;text-align:center;top:118px;">Загрузить</div>
<div class="edit" style="left:799px;top:111px;width:238px;height:26px;"></div>
<div class="arr" style="left:1023px;top:121px"></div>
<div class="t" style="left:802px;top:116px;">standard</div>
<div class="btn" style="left:1042px;top:112px;width:108px;height:28px;"></div>
<div class="t" style="left:1042px;width:108px;text-align:center;top:118px;">Сохранить как</div>
<div class="edit" style="left:1156px;top:114px;width:91px;height:23px;"></div>
<div class="t" style="left:1161px;top:117px;">standard</div>
<div class="" style="left:623px;top:181px;width:630px;height:615px;border:1px solid #898c95;background:#f0f0f0"></div>
<div class="" style="left:623px;top:154px;width:123px;height:29px;border:1px solid #898c95;border-bottom:none;background:#fff;border-radius:1px 1px 0 0"></div>
<div class="t" style="left:638px;top:160px;">Внешний вид</div>
<div class="grp" style="left:630px;top:198px;width:616px;height:407px;"></div>
<div class="t glab" style="left:636px;top:190px;padding:0 3px">Текст</div>
<div class="chk" style="left:633px;top:214px"><svg width="16" height="16" viewBox="0 0 16 16"><path d="M4.2 8.3 L6.6 11.6 L11.6 3.6" fill="none" stroke="#4a5b99" stroke-width="2.1" stroke-linecap="round" stroke-linejoin="round"/></svg></div>
<div class="t" style="left:653px;top:214px;">Текст:</div>
<div class="edit" style="left:773px;top:209px;width:470px;height:231px;"></div>
<div class="" style="left:1221px;top:211px;width:21px;height:227px;background:linear-gradient(to right,#e4e4e4,#f0f0f0 30%,#efefef)"></div>
<div style="left:1226px;top:218px;width:0;height:0;border-left:4.5px solid transparent;border-right:4.5px solid transparent;border-bottom:5px solid #7a7a7a"></div>
<div style="left:1226px;top:424px;width:0;height:0;border-left:4.5px solid transparent;border-right:4.5px solid transparent;border-top:5px solid #8a8a8a"></div>
<div class="t" style="left:779px;top:213px;letter-spacing:-0.35px">xsteel@154</div>
<div class="chk" style="left:633px;top:450px"><svg width="16" height="16" viewBox="0 0 16 16"><path d="M4.2 8.3 L6.6 11.6 L11.6 3.6" fill="none" stroke="#4a5b99" stroke-width="2.1" stroke-linecap="round" stroke-linejoin="round"/></svg></div>
<div class="t" style="left:653px;top:450px;">Цвет:</div>
<div class="chk" style="left:633px;top:482px"><svg width="16" height="16" viewBox="0 0 16 16"><path d="M4.2 8.3 L6.6 11.6 L11.6 3.6" fill="none" stroke="#4a5b99" stroke-width="2.1" stroke-linecap="round" stroke-linejoin="round"/></svg></div>
<div class="t" style="left:653px;top:482px;">Высота:</div>
<div class="chk" style="left:633px;top:514px"><svg width="16" height="16" viewBox="0 0 16 16"><path d="M4.2 8.3 L6.6 11.6 L11.6 3.6" fill="none" stroke="#4a5b99" stroke-width="2.1" stroke-linecap="round" stroke-linejoin="round"/></svg></div>
<div class="t" style="left:653px;top:514px;">Шрифт:</div>
<div class="chk" style="left:633px;top:546px"><svg width="16" height="16" viewBox="0 0 16 16"><path d="M4.2 8.3 L6.6 11.6 L11.6 3.6" fill="none" stroke="#4a5b99" stroke-width="2.1" stroke-linecap="round" stroke-linejoin="round"/></svg></div>
<div class="t" style="left:653px;top:546px;">Угол:</div>
<div class="chk" style="left:633px;top:577px"><svg width="16" height="16" viewBox="0 0 16 16"><path d="M4.2 8.3 L6.6 11.6 L11.6 3.6" fill="none" stroke="#4a5b99" stroke-width="2.1" stroke-linecap="round" stroke-linejoin="round"/></svg></div>
<div class="t" style="left:653px;top:576px;">Выравнивание:</div>
<div class="edit" style="left:773px;top:446px;width:470px;height:21px;"></div>
<div class="arr" style="left:1228px;top:454px"></div>
<div class="" style="left:778px;top:454px;width:46px;height:4px;background:#00ff00"></div>
<div class="edit" style="left:773px;top:478px;width:470px;height:23px;"></div>
<div class="t" style="left:779px;top:482px;">8.00</div>
<div class="edit" style="left:773px;top:510px;width:375px;height:23px;"></div>
<div class="t" style="left:779px;top:514px;">Arial Narrow</div>
<div class="btn" style="left:1153px;top:508px;width:89px;height:28px;"></div>
<div class="t" style="left:1153px;width:89px;text-align:center;top:514px;letter-spacing:-0.4px">Выбрать...</div>
<div class="edit" style="left:773px;top:541px;width:470px;height:23px;"></div>
<div class="t" style="left:779px;top:545px;">0.00000</div>
<div class="edit" style="left:773px;top:573px;width:470px;height:26px;"></div>
<div class="arr" style="left:1228px;top:583px"></div>
<svg style="position:absolute;left:777px;top:580px" width="15" height="12"><g stroke="#000" stroke-width="1"><path d="M0 0.5H14M0 2.5H12M0 4.5H14M0 6.5H12M0 8.5H14M0 10.5H10"/></g></svg>
<div class="t" style="left:797px;top:578px;">Слева</div>
<div class="grp" style="left:630px;top:620px;width:320px;height:109px;"></div>
<div class="t glab" style="left:636px;top:612px;padding:0 3px">Рамка</div>
<div class="chk" style="left:633px;top:637px"><svg width="16" height="16" viewBox="0 0 16 16"><path d="M4.2 8.3 L6.6 11.6 L11.6 3.6" fill="none" stroke="#4a5b99" stroke-width="2.1" stroke-linecap="round" stroke-linejoin="round"/></svg></div>
<div class="t" style="left:653px;top:637px;">Тип:</div>
<div class="chk" style="left:633px;top:670px"><svg width="16" height="16" viewBox="0 0 16 16"><path d="M4.2 8.3 L6.6 11.6 L11.6 3.6" fill="none" stroke="#4a5b99" stroke-width="2.1" stroke-linecap="round" stroke-linejoin="round"/></svg></div>
<div class="t" style="left:653px;top:670px;">Линия выноски:</div>
<div class="chk" style="left:633px;top:702px"><svg width="16" height="16" viewBox="0 0 16 16"><path d="M4.2 8.3 L6.6 11.6 L11.6 3.6" fill="none" stroke="#4a5b99" stroke-width="2.1" stroke-linecap="round" stroke-linejoin="round"/></svg></div>
<div class="t" style="left:653px;top:702px;">Цвет:</div>
<div class="edit" style="left:777px;top:633px;width:170px;height:21px;"></div>
<div class="arr" style="left:932px;top:641px"></div>
<div class="t" style="left:795px;top:637px;font-size:10px;line-height:12px;letter-spacing:0.8px;color:#222">123</div>
<div class="edit" style="left:777px;top:666px;width:170px;height:21px;"></div>
<div class="arr" style="left:932px;top:674px"></div>
<div class="" style="left:792px;top:672px;width:21px;height:8px;border:1px solid #000;background:#fff"></div>
<div class="edit" style="left:777px;top:699px;width:170px;height:21px;"></div>
<div class="arr" style="left:932px;top:707px"></div>
<div class="" style="left:782px;top:707px;width:46px;height:4px;background:#000"></div>
<div class="grp" style="left:960px;top:621px;width:286px;height:108px;"></div>
<div class="t glab" style="left:966px;top:612px;padding:0 3px">Стрелка</div>
<div class="chk" style="left:963px;top:636px"><svg width="16" height="16" viewBox="0 0 16 16"><path d="M4.2 8.3 L6.6 11.6 L11.6 3.6" fill="none" stroke="#4a5b99" stroke-width="2.1" stroke-linecap="round" stroke-linejoin="round"/></svg></div>
<div class="t" style="left:983px;top:636px;">Тип:</div>
<div class="chk" style="left:963px;top:666px"><svg width="16" height="16" viewBox="0 0 16 16"><path d="M4.2 8.3 L6.6 11.6 L11.6 3.6" fill="none" stroke="#4a5b99" stroke-width="2.1" stroke-linecap="round" stroke-linejoin="round"/></svg></div>
<div class="chk" style="left:963px;top:696px"><svg width="16" height="16" viewBox="0 0 16 16"><path d="M4.2 8.3 L6.6 11.6 L11.6 3.6" fill="none" stroke="#4a5b99" stroke-width="2.1" stroke-linecap="round" stroke-linejoin="round"/></svg></div>
<div class="edit" style="left:1058px;top:633px;width:185px;height:17px;"></div>
<div class="arr" style="left:1228px;top:639px"></div>
<svg style="position:absolute;left:1066px;top:636px" width="34" height="10"><path d="M1 5.5H30" stroke="#000" stroke-width="1"/><path d="M25 2.5L30 5.5L25 8.5" fill="none" stroke="#000" stroke-width="1" stroke-dasharray="1 1"/></svg>
<svg style="position:absolute;left:987px;top:665px" width="60" height="14"><path d="M2 6.5H40" stroke="#000" stroke-width="1.2"/><path d="M40 2.5L51 6.5L40 10.5Z" fill="#000"/><path d="M48 2.5H57M48 10.5H57M57 1.5V11.5" stroke="#000" stroke-width="1"/></svg>
<svg style="position:absolute;left:987px;top:693px" width="60" height="18"><path d="M2 6.5H40" stroke="#000" stroke-width="1.2"/><path d="M40 2.5L52 6.5L40 10.5Z" fill="#000"/><path d="M40 14.5H53M53 9.5V15.5M40 12.5V16.5" stroke="#000" stroke-width="1"/></svg>
<div class="edit" style="left:1058px;top:662px;width:185px;height:23px;"></div>
<div class="t" style="left:1065px;top:666px;">2.00</div>
<div class="edit" style="left:1058px;top:691px;width:185px;height:23px;"></div>
<div class="t" style="left:1065px;top:695px;">2.50</div>
<div class="grp" style="left:630px;top:745px;width:616px;height:43px;"></div>
<div class="t glab" style="left:636px;top:736px;padding:0 3px">Размещение</div>
<div class="chk" style="left:633px;top:762px"><svg width="16" height="16" viewBox="0 0 16 16"><path d="M4.2 8.3 L6.6 11.6 L11.6 3.6" fill="none" stroke="#4a5b99" stroke-width="2.1" stroke-linecap="round" stroke-linejoin="round"/></svg></div>
<div class="btn" style="left:654px;top:756px;width:104px;height:28px;"></div>
<div class="t" style="left:654px;width:104px;text-align:center;top:762px;letter-spacing:-0.3px">Поместить...</div>
<div class="btn" style="left:624px;top:801px;width:71px;height:28px;"></div>
<div class="t" style="left:624px;width:71px;text-align:center;top:807px;">OK</div>
<div class="btn" style="left:701px;top:801px;width:131px;height:28px;"></div>
<div class="t" style="left:701px;width:131px;text-align:center;top:807px;">Применить</div>
<div class="btn" style="left:838px;top:801px;width:120px;height:28px;"></div>
<div class="t" style="left:838px;width:120px;text-align:center;top:807px;">Изменить</div>
<div class="btn" style="left:964px;top:801px;width:117px;height:28px;"></div>
<div class="t" style="left:964px;width:117px;text-align:center;top:807px;">Получить</div>
<div class="btn" style="left:1087px;top:805px;width:55px;height:19px;"></div>
<svg style="position:absolute;left:1092px;top:807px" width="46" height="16"><rect x="1.5" y="1.5" width="11.5" height="11.5" fill="#fff"/><path d="M1.6,12.6 V1.6 H12.6" fill="none" stroke="#000" stroke-width="1.7"/><path d="M4.2,7 L6.5,10.2 L11,4.4" fill="none" stroke="#000" stroke-width="2"/><path d="M25.2,1.2 L18.6,14.2" stroke="#000" stroke-width="1.7" stroke-linecap="round" stroke-dasharray="1.6 .5"/><rect x="31.5" y="1.5" width="11.5" height="11.5" fill="#fff"/><path d="M31.6,12.6 V1.6 H42.6" fill="none" stroke="#000" stroke-width="1.7"/></svg>
<div class="btn" style="left:1148px;top:801px;width:104px;height:28px;"></div>
<div class="t" style="left:1148px;width:104px;text-align:center;top:807px;">Отмена</div>
</body></html>
